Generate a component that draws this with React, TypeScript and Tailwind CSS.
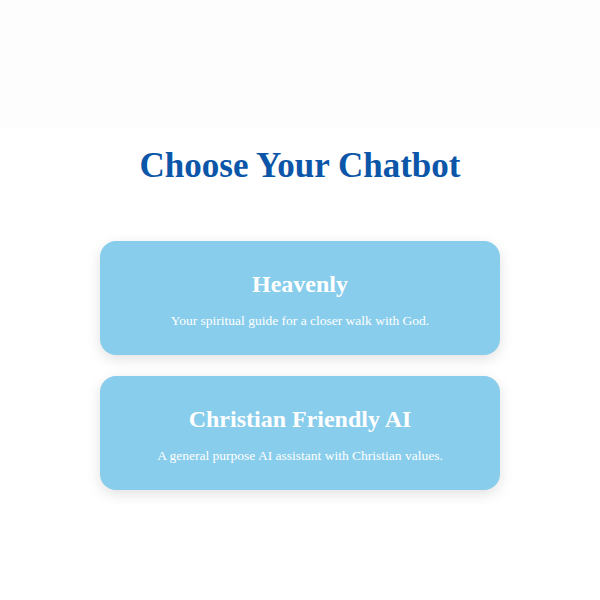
import React from 'react';

const bots = [
  { name: 'Heavenly', desc: 'Your spiritual guide for a closer walk with God.' },
  { name: 'Christian Friendly AI', desc: 'A general purpose AI assistant with Christian values.' },
];

export default function App() {
  return (
    <div className="min-h-[600px] bg-white" style={{ fontFamily: '"Liberation Serif", "DejaVu Serif", serif' }}>
      <div className="h-[128px] bg-[#fdfdfd]" />
      <h1 className="mt-[18px] text-center text-[35px] leading-[40px] font-bold text-[#0b56a8]">Choose Your Chatbot</h1>
      <div className="mt-[55px] flex flex-col items-center gap-[21px]">
        {bots.map((b) => (
          <button
            key={b.name}
            className="w-[400px] h-[114px] rounded-2xl bg-[#88cdeb] text-white shadow-[0_4px_14px_rgba(0,0,0,0.12)] flex flex-col items-center pt-[28px]"
          >
            <span className="text-[24px] leading-[30px] font-bold">{b.name}</span>
            <span className="mt-[13px] text-[13.5px] leading-[18px]">{b.desc}</span>
          </button>
        ))}
      </div>
    </div>
  );
}
